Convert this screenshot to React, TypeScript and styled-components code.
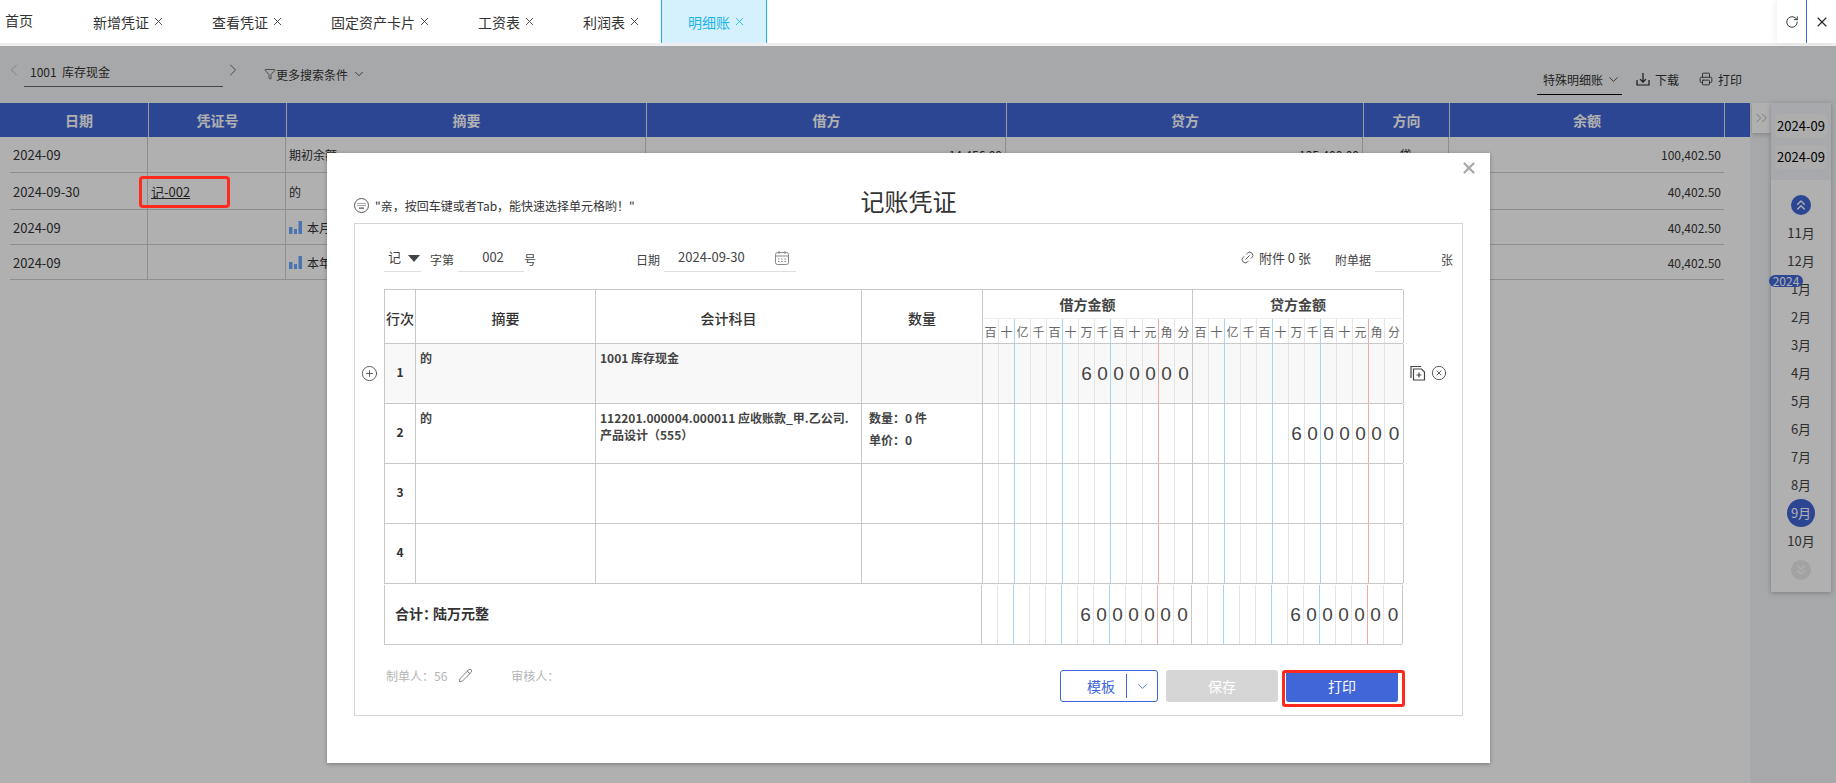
import React from "react";
import styled, { createGlobalStyle } from "styled-components";
import {
  X,
  RotateCw,
  ChevronLeft,
  ChevronRight,
  ChevronDown,
  ChevronsUp,
  ChevronsDown,
  ChevronsRight,
  Filter,
  Printer,
  CirclePlus,
  CircleX,
  Pencil,
  Link2,
} from "lucide-react";

const tabs = [
  { name: "新增凭证" },
  { name: "查看凭证" },
  { name: "固定资产卡片" },
  { name: "工资表" },
  { name: "利润表" },
  { name: "明细账", active: true },
];

const ledgerRows = [
  { h: 36, date: "2024-09", no: "", summary: "期初余额", debit: "14,456.00", credit: "135,400.00", dir: "贷", balance: "100,402.50" },
  { h: 37, date: "2024-09-30", no: "记-002", summary: "的", debit: "", credit: "", dir: "", balance: "40,402.50" },
  { h: 35, date: "2024-09", no: "", summary: "本月", chart: true, debit: "", credit: "", dir: "", balance: "40,402.50" },
  { h: 35, date: "2024-09", no: "", summary: "本年", chart: true, debit: "", credit: "", dir: "", balance: "40,402.50" },
];

const months = ["11月", "12月", "1月", "2月", "3月", "4月", "5月", "6月", "7月", "8月", "9月", "10月"];
const units = ["百", "十", "亿", "千", "百", "十", "万", "千", "百", "十", "元", "角", "分"];
const amount = ["", "", "", "", "", "", "6", "0", "0", "0", "0", "0", "0"];
const blank = units.map(() => "");

const lineColor = (i: number) => {
  if (i === 12) return "#c8c8c8";
  if (i === 10) return "#f0a9a9";
  if (i === 1 || i === 4 || i === 7) return "#a3d6f7";
  return "#e4e4e4";
};

const Digits: React.FC<{ values: string[]; label?: boolean }> = ({ values, label }) => (
  <DigitGrid>
    {values.map((v, i) => (
      <DigitCell key={i} $line={lineColor(i)} $label={label}>
        {v}
      </DigitCell>
    ))}
  </DigitGrid>
);

const TipIcon = () => (
  <svg width="15" height="15" viewBox="0 0 15 15" fill="none" stroke="#555">
    <circle cx="7.5" cy="7.5" r="7" />
    <path d="M3.5 5.5h1M5.5 5.5h1M7.5 5.5h1M9.5 5.5h1M11 5.5h.5M3.5 7.5h1M5.5 7.5h1M7.5 7.5h1M9.5 7.5h1M11 7.5h.5M5 10.2h5" strokeWidth="1.2" />
  </svg>
);

const DownloadIcon = () => (
  <svg width="14" height="14" viewBox="0 0 14 14" fill="none" stroke="#222" strokeWidth="1.2">
    <path d="M7 1v9M4 7.2 7 10.2 10 7.2M1 8v5h12V8" />
  </svg>
);

const CalendarIcon = () => (
  <svg width="16" height="16" viewBox="0 0 16 16" fill="none" stroke="#888">
    <rect x="1.5" y="2.5" width="13" height="12" rx="2" />
    <path d="M1.5 6h13M5 1v3M11 1v3M4 9h1.5M7.2 9h1.5M10.5 9H12M4 11.5h1.5M7.2 11.5h1.5M10.5 11.5H12" />
  </svg>
);

const CopyAddIcon = () => (
  <svg width="16" height="16" viewBox="0 0 16 16" fill="none" stroke="#444" strokeWidth="1.2">
    <path d="M11 1.5H1v11.5" />
    <path d="M3.5 4h8l3 3v8h-11z" />
    <path d="M9 7.5v5M6.5 10h5" />
  </svg>
);

const BarsIcon = () => (
  <svg width="13" height="13" viewBox="0 0 13 13" fill="#6ba8ff">
    <rect x="0" y="6" width="3.5" height="7" />
    <rect x="5" y="8" width="3" height="5" />
    <rect x="9.5" y="0" width="3.5" height="13" />
  </svg>
);

const VoucherRow: React.FC<{ no: number; summary?: string; account?: string; qty?: boolean; debit?: string[]; credit?: string[]; shaded?: boolean; tools?: boolean }> = ({
  no,
  summary,
  account,
  qty,
  debit = blank,
  credit = blank,
  shaded,
  tools,
}) => (
  <BodyRow $shaded={shaded}>
    {tools && (
      <AddLine>
        <CirclePlus size={17} strokeWidth={1.1} />
      </AddLine>
    )}
    <RowNo>{no}</RowNo>
    <TextCell>{summary}</TextCell>
    <TextCell>{account}</TextCell>
    <QtyCell>
      {qty && (
        <>
          <div>数量：0 件</div>
          <div>单价：0</div>
        </>
      )}
    </QtyCell>
    <Digits values={debit} />
    <Digits values={credit} />
    {tools && (
      <RowTools>
        <CopyAddIcon />
        <CircleX size={16} strokeWidth={1.3} />
      </RowTools>
    )}
  </BodyRow>
);

const App: React.FC = () => {
  return (
    <Page>
      <GlobalStyle />
      <TabBar>
        <HomeTab>首页</HomeTab>
        {tabs.map((t) => (
          <Tab key={t.name} $active={t.active}>
            {t.name}
            <X size={13} strokeWidth={1.6} />
          </Tab>
        ))}
        <TabActions>
          <TabAction $divider>
            <RotateCw size={14} strokeWidth={1.5} />
          </TabAction>
          <TabAction>
            <X size={16} strokeWidth={1.6} />
          </TabAction>
        </TabActions>
      </TabBar>

      <Toolbar>
        <ArrowBtn $dim>
          <ChevronLeft size={20} strokeWidth={0.9} />
        </ArrowBtn>
        <AccountSelect>1001&nbsp;&nbsp;库存现金</AccountSelect>
        <ArrowBtn>
          <ChevronRight size={20} strokeWidth={0.9} />
        </ArrowBtn>
        <MoreFilter>
          <Filter size={12} strokeWidth={1.4} />
          更多搜索条件
          <ChevronDown size={14} strokeWidth={1.4} />
        </MoreFilter>
        <ToolbarRight>
          <SpecialSelect>
            特殊明细账
            <ChevronDown size={15} strokeWidth={1.3} />
          </SpecialSelect>
          <ToolAction>
            <DownloadIcon />
            下载
          </ToolAction>
          <ToolAction>
            <Printer size={14} strokeWidth={1.5} />
            打印
          </ToolAction>
        </ToolbarRight>
      </Toolbar>

      <Main>
        <LedgerArea>
          <LedgerHead>
            <HeadCell>日期</HeadCell>
            <HeadCell>凭证号</HeadCell>
            <HeadCell>摘要</HeadCell>
            <HeadCell>借方</HeadCell>
            <HeadCell>贷方</HeadCell>
            <HeadCell>方向</HeadCell>
            <HeadCell>余额</HeadCell>
          </LedgerHead>
          {ledgerRows.map((r) => (
            <LedgerRow key={r.date + r.summary} $h={r.h}>
              <LedgerCell $date>{r.date}</LedgerCell>
              <LedgerCell $date>
                {r.no && (
                  <>
                    <VoucherLink>{r.no}</VoucherLink>
                    <LinkMark />
                  </>
                )}
              </LedgerCell>
              <LedgerCell>
                {r.chart && <BarsIcon />}
                {r.summary}
              </LedgerCell>
              <LedgerCell $right>{r.debit}</LedgerCell>
              <LedgerCell $right>{r.credit}</LedgerCell>
              <LedgerCell $center>{r.dir}</LedgerCell>
              <LedgerCell $right>{r.balance}</LedgerCell>
            </LedgerRow>
          ))}
        </LedgerArea>
        <RailStrip>
          <RailToggle>
            <ChevronsRight size={20} strokeWidth={1.1} />
          </RailToggle>
          <Rail>
            <RangeBox>
              <RangeChip>2024-09</RangeChip>
              <RangeChip>2024-09</RangeChip>
            </RangeBox>
            <MonthList>
              <RoundBtn>
                <ChevronsUp size={16} strokeWidth={2} />
              </RoundBtn>
              {months.map((m) => (
                <MonthItem key={m}>
                  {m === "1月" && <YearBadge>2024</YearBadge>}
                  <MonthText $active={m === "9月"}>{m}</MonthText>
                </MonthItem>
              ))}
              <RoundBtn $off>
                <ChevronsDown size={16} strokeWidth={2} />
              </RoundBtn>
            </MonthList>
          </Rail>
        </RailStrip>
      </Main>

      <Mask />

      <Modal>
        <CloseBtn>
          <X size={18} strokeWidth={3} />
        </CloseBtn>
        <ModalHead>
          <Tip>
            <TipIcon />
            "亲，按回车键或者Tab，能快速选择单元格哟！"
          </Tip>
          <ModalTitle>记账凭证</ModalTitle>
        </ModalHead>
        <VoucherBox>
          <MetaRow>
            <Field $w={37}>
              记<Caret />
            </Field>
            <MetaLabel $ml={9}>字第</MetaLabel>
            <Field $w={66} $ml={4} $center>
              002
            </Field>
            <MetaLabel>号</MetaLabel>
            <MetaLabel $ml={100}>日期</MetaLabel>
            <Field $w={132} $ml={4} $pad={14}>
              2024-09-30
              <FieldIcon>
                <CalendarIcon />
              </FieldIcon>
            </Field>
            <Attach>
              <Link2 size={15} strokeWidth={1.3} />
              附件 0 张
            </Attach>
            <MetaLabel $ml={24}>附单据</MetaLabel>
            <Field $w={66} $ml={4} />
            <MetaLabel>张</MetaLabel>
          </MetaRow>

          <VoucherTable>
            <HeadRow>
              <ColTitle>行次</ColTitle>
              <ColTitle>摘要</ColTitle>
              <ColTitle>会计科目</ColTitle>
              <ColTitle>数量</ColTitle>
              <AmountHead>
                <AmountTitle>借方金额</AmountTitle>
                <Digits values={units} label />
              </AmountHead>
              <AmountHead>
                <AmountTitle>贷方金额</AmountTitle>
                <Digits values={units} label />
              </AmountHead>
            </HeadRow>
            <VoucherRow no={1} summary="的" account="1001 库存现金" debit={amount} shaded tools />
            <VoucherRow no={2} summary="的" account="112201.000004.000011 应收账款_甲.乙公司.产品设计（555）" qty credit={amount} />
            <VoucherRow no={3} />
            <VoucherRow no={4} />
            <TotalRow>
              <TotalLabel>
                合计：<TotalWords>陆万元整</TotalWords>
              </TotalLabel>
              <Digits values={amount} />
              <Digits values={amount} />
            </TotalRow>
          </VoucherTable>

          <FootRow>
            <Signer>
              制单人：56
              <Pencil size={15} strokeWidth={1.2} color="#555" />
            </Signer>
            <Signer $ml={38}>审核人：</Signer>
            <FootButtons>
              <TemplateBtn>
                <TemplateText>模板</TemplateText>
                <TemplateArrow>
                  <ChevronDown size={15} strokeWidth={1.3} />
                </TemplateArrow>
              </TemplateBtn>
              <SaveBtn>保存</SaveBtn>
              <PrintWrap>
                <PrintBtn>打印</PrintBtn>
                <PrintMark />
              </PrintWrap>
            </FootButtons>
          </FootRow>
        </VoucherBox>
      </Modal>
    </Page>
  );
};

export default App;

const GlobalStyle = createGlobalStyle`
  html, body {
    margin: 0;
    padding: 0;
    height: 100%;
    overflow: hidden;
  }
  body {
    font-family: "Noto Sans CJK SC", "Noto Sans", sans-serif;
    font-size: 12px;
    color: #333;
  }
  * {
    box-sizing: border-box;
  }
`;

const Page = styled.div`
  position: relative;
  width: 1836px;
  height: 783px;
  display: flex;
  flex-direction: column;
  overflow: hidden;
  background: #f2f3f5;
`;

const TabBar = styled.div`
  height: 46px;
  flex: none;
  display: flex;
  background: #fff;
  border-bottom: 3px solid #eeeeee;
`;

const HomeTab = styled.div`
  width: 67px;
  padding-left: 5px;
  line-height: 40px;
  font-size: 14px;
  color: #333;
`;

const Tab = styled.div<{ $active?: boolean }>`
  display: flex;
  align-items: center;
  gap: 3px;
  padding: 0 20px 0 26px;
  margin-right: -1px;
  font-size: 14px;
  color: ${(p) => (p.$active ? "#1cb4e8" : "#333")};
  background: ${(p) => (p.$active ? "#d6f1fe" : "transparent")};
  border-left: 1px solid ${(p) => (p.$active ? "#1cb4e8" : "transparent")};
  border-right: 1px solid ${(p) => (p.$active ? "#1cb4e8" : "transparent")};
  &:nth-child(2) {
    margin-left: -1px;
  }
`;

const TabActions = styled.div`
  margin-left: auto;
  width: 59px;
  display: flex;
  background: #fff;
  box-shadow: -2px 0 6px rgba(0, 0, 0, 0.06);
`;

const TabAction = styled.div<{ $divider?: boolean }>`
  flex: 1;
  display: flex;
  align-items: center;
  justify-content: center;
  color: #222;
  border-right: ${(p) => (p.$divider ? "1px solid #4066d7" : "none")};
`;

const Toolbar = styled.div`
  height: 57px;
  flex: none;
  display: flex;
  align-items: flex-start;
  padding: 14px 94px 0 4px;
`;

const ArrowBtn = styled.div<{ $dim?: boolean }>`
  width: 20px;
  height: 20px;
  display: flex;
  align-items: center;
  justify-content: center;
  color: ${(p) => (p.$dim ? "#aaa" : "#444")};
`;

const AccountSelect = styled.div`
  width: 199px;
  height: 27px;
  padding-left: 6px;
  line-height: 24px;
  font-size: 12px;
  border-bottom: 1px solid #666;
`;

const MoreFilter = styled.div`
  display: flex;
  align-items: center;
  margin: 4px 0 0 21px;
  height: 20px;
  font-size: 12px;

  svg:last-child {
    margin-left: 4px;
  }
`;

const ToolbarRight = styled.div`
  margin-left: auto;
  display: flex;
  align-items: flex-start;
  gap: 20px;
`;

const SpecialSelect = styled.div`
  display: flex;
  align-items: center;
  gap: 3px;
  width: 85px;
  height: 35px;
  padding: 7px 0 3px 6px;
  font-size: 12px;
  border-bottom: 1px solid #000;
  margin-right: -6px;
`;

const ToolAction = styled.div`
  display: flex;
  align-items: center;
  gap: 5px;
  height: 38px;
  font-size: 12px;
`;

const Main = styled.div`
  flex: 1;
  display: flex;
  min-height: 0;
`;

const LedgerArea = styled.div`
  width: 1750px;
  background: #fff;
`;

const LedgerHead = styled.div`
  height: 34px;
  display: grid;
  grid-template-columns: 139px 138px 360px 360px 357px 86px 275px;
  padding-left: 10px;
  background: #4066d7;
`;

const HeadCell = styled.div`
  display: flex;
  align-items: center;
  justify-content: center;
  color: #fff;
  font-size: 14px;
  font-weight: 700;
  border-right: 1px solid #e2e2e2;
`;

const LedgerRow = styled.div<{ $h: number }>`
  height: ${(p) => p.$h}px;
  margin-left: 10px;
  width: 1714px;
  display: grid;
  grid-template-columns: 138px 138px 360px 360px 357px 86px 275px;
  border-bottom: 1px solid #cecece;
`;

const LedgerCell = styled.div<{ $right?: boolean; $center?: boolean; $date?: boolean }>`
  position: relative;
  display: flex;
  align-items: center;
  gap: 5px;
  padding: 0 3px;
  white-space: nowrap;
  font-size: ${(p) => (p.$date ? "13px" : "12px")};
  justify-content: ${(p) => (p.$right ? "flex-end" : p.$center ? "center" : "flex-start")};
  border-right: ${(p) => (p.$right || p.$center ? "none" : "1px solid #cecece")};
  &:nth-child(4),
  &:nth-child(5),
  &:nth-child(6) {
    border-right: 1px solid #cecece;
  }
`;

const VoucherLink = styled.span`
  text-decoration: underline;
`;

const LinkMark = styled.div`
  position: absolute;
  z-index: 11;
  left: -9px;
  top: 3px;
  width: 91px;
  height: 32px;
  border: 3px solid #ff2a1e;
  border-radius: 4px;
`;

const RailStrip = styled.div`
  flex: 1;
  display: flex;
  align-items: flex-start;
  padding-left: 2px;
`;

const RailToggle = styled.div`
  width: 19px;
  height: 30px;
  display: flex;
  align-items: center;
  justify-content: center;
  background: #fff;
  color: #aaa;
  box-shadow: 0 2px 4px rgba(0, 0, 0, 0.18);
`;

const Rail = styled.div`
  width: 60px;
  background: #fff;
  box-shadow: 0 1px 5px rgba(0, 0, 0, 0.25);
`;

const RangeBox = styled.div`
  height: 77px;
  padding: 11px 4px 0;
  display: flex;
  flex-direction: column;
  gap: 7px;
  background: #f3f5f9;
`;

const RangeChip = styled.div`
  height: 24px;
  line-height: 24px;
  text-align: center;
  font-size: 13px;
  color: #000;
  border-radius: 5px;
  background: #fbfbfb;
`;

const MonthList = styled.div`
  display: flex;
  flex-direction: column;
  align-items: center;
  padding: 15px 0 12px;
  background: #fff;
`;

const RoundBtn = styled.div<{ $off?: boolean }>`
  width: 20px;
  height: 20px;
  margin: ${(p) => (p.$off ? "5px 0 0" : "0 0 4px")};
  display: flex;
  align-items: center;
  justify-content: center;
  border-radius: 50%;
  color: #fff;
  background: ${(p) => (p.$off ? "#ebebeb" : "#4066d7")};
`;

const MonthItem = styled.div`
  position: relative;
  width: 100%;
  height: 28px;
  display: flex;
  align-items: center;
  justify-content: center;
`;

const MonthText = styled.div<{ $active?: boolean }>`
  width: 28px;
  height: 28px;
  line-height: 28px;
  text-align: center;
  white-space: nowrap;
  font-size: 13px;
  border-radius: 50%;
  color: ${(p) => (p.$active ? "#fff" : "#444")};
  background: ${(p) => (p.$active ? "#4066d7" : "transparent")};
`;

const YearBadge = styled.div`
  position: absolute;
  left: -2px;
  top: 0;
  width: 34px;
  height: 12px;
  line-height: 12px;
  text-align: center;
  font-size: 12px;
  color: #fff;
  border-radius: 6px;
  background: #4066d7;
`;

const Mask = styled.div`
  position: absolute;
  z-index: 10;
  left: 0;
  right: 0;
  top: 46px;
  bottom: 0;
  background: rgba(0, 0, 0, 0.31);
`;

const Modal = styled.div`
  position: absolute;
  z-index: 20;
  left: 327px;
  top: 153px;
  width: 1163px;
  height: 610px;
  background: #fff;
  box-shadow: 0 1px 4px rgba(0, 0, 0, 0.3);
`;

const CloseBtn = styled.div`
  position: absolute;
  right: 12px;
  top: 6px;
  color: #a8a8a8;
  display: flex;
`;

const ModalHead = styled.div`
  height: 70px;
  display: grid;
  grid-template-columns: 1fr auto 1fr;
  align-items: end;
  padding: 0 27px 6px;
`;

const Tip = styled.div`
  display: flex;
  align-items: center;
  gap: 6px;
  height: 18px;
  margin-bottom: 3px;
  font-size: 12px;
  white-space: nowrap;
`;

const ModalTitle = styled.div`
  font-size: 24px;
  line-height: 32px;
  color: #333;
`;

const VoucherBox = styled.div`
  margin-left: 27px;
  width: 1109px;
  height: 493px;
  border: 1px solid #d4d4d4;
`;

const MetaRow = styled.div`
  height: 48px;
  display: flex;
  align-items: flex-end;
  padding: 0 9px 0 29px;
`;

const Field = styled.div<{ $w?: number; $ml?: number; $center?: boolean; $pad?: number }>`
  position: relative;
  width: ${(p) => p.$w}px;
  margin-left: ${(p) => p.$ml || 0}px;
  height: 28px;
  line-height: 26px;
  padding-left: ${(p) => p.$pad ?? 4}px;
  text-align: ${(p) => (p.$center ? "center" : "left")};
  font-size: 13px;
  color: #444;
  border-bottom: 1px solid #dedede;
`;

const Caret = styled.span`
  position: absolute;
  right: 1px;
  top: 11px;
  border-left: 6px solid transparent;
  border-right: 6px solid transparent;
  border-top: 7px solid #444;
`;

const FieldIcon = styled.span`
  position: absolute;
  right: 6px;
  top: 6px;
  display: flex;
`;

const MetaLabel = styled.div<{ $ml?: number }>`
  margin-left: ${(p) => p.$ml || 0}px;
  height: 18px;
  line-height: 18px;
  margin-bottom: 3px;
  font-size: 12px;
  color: #444;
`;

const Attach = styled.div`
  margin-left: auto;
  display: flex;
  align-items: center;
  gap: 4px;
  height: 18px;
  margin-bottom: 6px;
  font-size: 13px;
  color: #444;

  svg {
    transform: rotate(-45deg);
  }
`;

const VoucherTable = styled.div`
  margin: 17px 0 0 29px;
  width: 1019px;
  border-top: 1px solid #c8c8c8;
`;

const HeadRow = styled.div`
  display: grid;
  grid-template-columns: 31px 180px 266px 121px 210px 211px;
  height: 54px;
  border-left: 1px solid #c8c8c8;
  border-bottom: 1px solid #c8c8c8;
`;

const ColTitle = styled.div`
  display: flex;
  align-items: center;
  justify-content: center;
  padding-top: 2px;
  font-size: 14px;
  font-weight: 500;
  color: #333;
  white-space: nowrap;
  border-right: 1px solid #c8c8c8;
`;

const AmountHead = styled.div`
  display: flex;
  flex-direction: column;
`;

const AmountTitle = styled.div`
  height: 29px;
  line-height: 28px;
  text-align: center;
  font-size: 14px;
  font-weight: 700;
  color: #444;
  border-right: 1px solid #c8c8c8;
  border-bottom: 1px solid #eeeeee;
`;

const DigitGrid = styled.div`
  flex: 1;
  display: grid;
  grid-template-columns: repeat(12, 16px) 1fr;
`;

const DigitCell = styled.div<{ $line: string; $label?: boolean }>`
  display: flex;
  align-items: center;
  justify-content: center;
  overflow: visible;
  font-family: ${(p) => (p.$label ? `"Noto Sans CJK SC", sans-serif` : `"Liberation Sans", Arial, sans-serif`)};
  font-size: ${(p) => (p.$label ? "12px" : "19px")};
  color: ${(p) => (p.$label ? "#666" : "#444")};
  border-right: 1px solid ${(p) => p.$line};
`;

const BodyRow = styled.div<{ $shaded?: boolean }>`
  position: relative;
  display: grid;
  grid-template-columns: 31px 180px 266px 121px 210px 211px;
  height: 60px;
  background: ${(p) => (p.$shaded ? "#f8f8f8" : "#fff")};
  border-left: 1px solid #c8c8c8;
  border-bottom: 1px solid #c8c8c8;
`;

const AddLine = styled.div`
  position: absolute;
  left: -24px;
  top: 21px;
  display: flex;
  color: #333;
`;

const RowTools = styled.div`
  position: absolute;
  right: -44px;
  top: 21px;
  display: flex;
  gap: 5px;
  color: #444;
`;

const RowNo = styled.div`
  display: flex;
  align-items: center;
  justify-content: center;
  padding-bottom: 5px;
  font-weight: 700;
  font-size: 12px;
  border-right: 1px solid #c8c8c8;
`;

const TextCell = styled.div`
  padding: 5px 5px 0 4px;
  line-height: 17px;
  font-weight: 700;
  font-size: 12px;
  color: #444;
  border-right: 1px solid #c8c8c8;
`;

const QtyCell = styled.div`
  padding: 3px 0 0 7px;
  line-height: 22px;
  font-weight: 700;
  font-size: 12px;
  color: #444;
  border-right: 1px solid #c8c8c8;
`;

const TotalRow = styled.div`
  display: grid;
  grid-template-columns: 597px 210px 211px;
  width: 1018px;
  height: 60px;
  margin-top: 1px;
  border-left: 1px solid #c8c8c8;
  border-bottom: 1px solid #c8c8c8;
`;

const TotalLabel = styled.div`
  display: flex;
  align-items: center;
  padding: 0 0 4px 10px;
  font-size: 14px;
  font-weight: 700;
  color: #333;
  border-right: 1px solid #c8c8c8;
`;

const TotalWords = styled.span`
  margin-left: -4px;
`;

const FootRow = styled.div`
  display: flex;
  align-items: flex-start;
  margin-top: 21px;
  padding: 0 64px 0 31px;
`;

const Signer = styled.div<{ $ml?: number }>`
  display: flex;
  align-items: center;
  gap: 11px;
  height: 18px;
  margin-left: ${(p) => p.$ml || 0}px;
  font-size: 12px;
  color: #b5b5b5;
`;

const FootButtons = styled.div`
  margin-left: auto;
  margin-top: 4px;
  display: flex;
  gap: 8px;
`;

const TemplateBtn = styled.div`
  width: 98px;
  height: 32px;
  display: flex;
  align-items: center;
  border: 1px solid #4066d7;
  border-radius: 3px;
  color: #4066d7;
  font-size: 14px;
`;

const TemplateText = styled.div`
  flex: 1;
  padding-left: 26px;
`;

const TemplateArrow = styled.div`
  width: 31px;
  height: 24px;
  display: flex;
  align-items: center;
  justify-content: center;
  border-left: 1px solid #4066d7;
`;

const SaveBtn = styled.div`
  width: 112px;
  height: 32px;
  line-height: 32px;
  text-align: center;
  font-size: 14px;
  color: #fff;
  background: #d6d6d6;
  border-radius: 3px;
`;

const PrintWrap = styled.div`
  position: relative;
`;

const PrintBtn = styled.div`
  width: 112px;
  height: 32px;
  line-height: 32px;
  text-align: center;
  font-size: 14px;
  color: #fff;
  background: #4066d7;
  border-radius: 3px;
`;

const PrintMark = styled.div`
  position: absolute;
  left: -4px;
  right: -7px;
  top: 0;
  bottom: -5px;
  border: 3px solid #ff2a1e;
  border-radius: 3px;
`;
